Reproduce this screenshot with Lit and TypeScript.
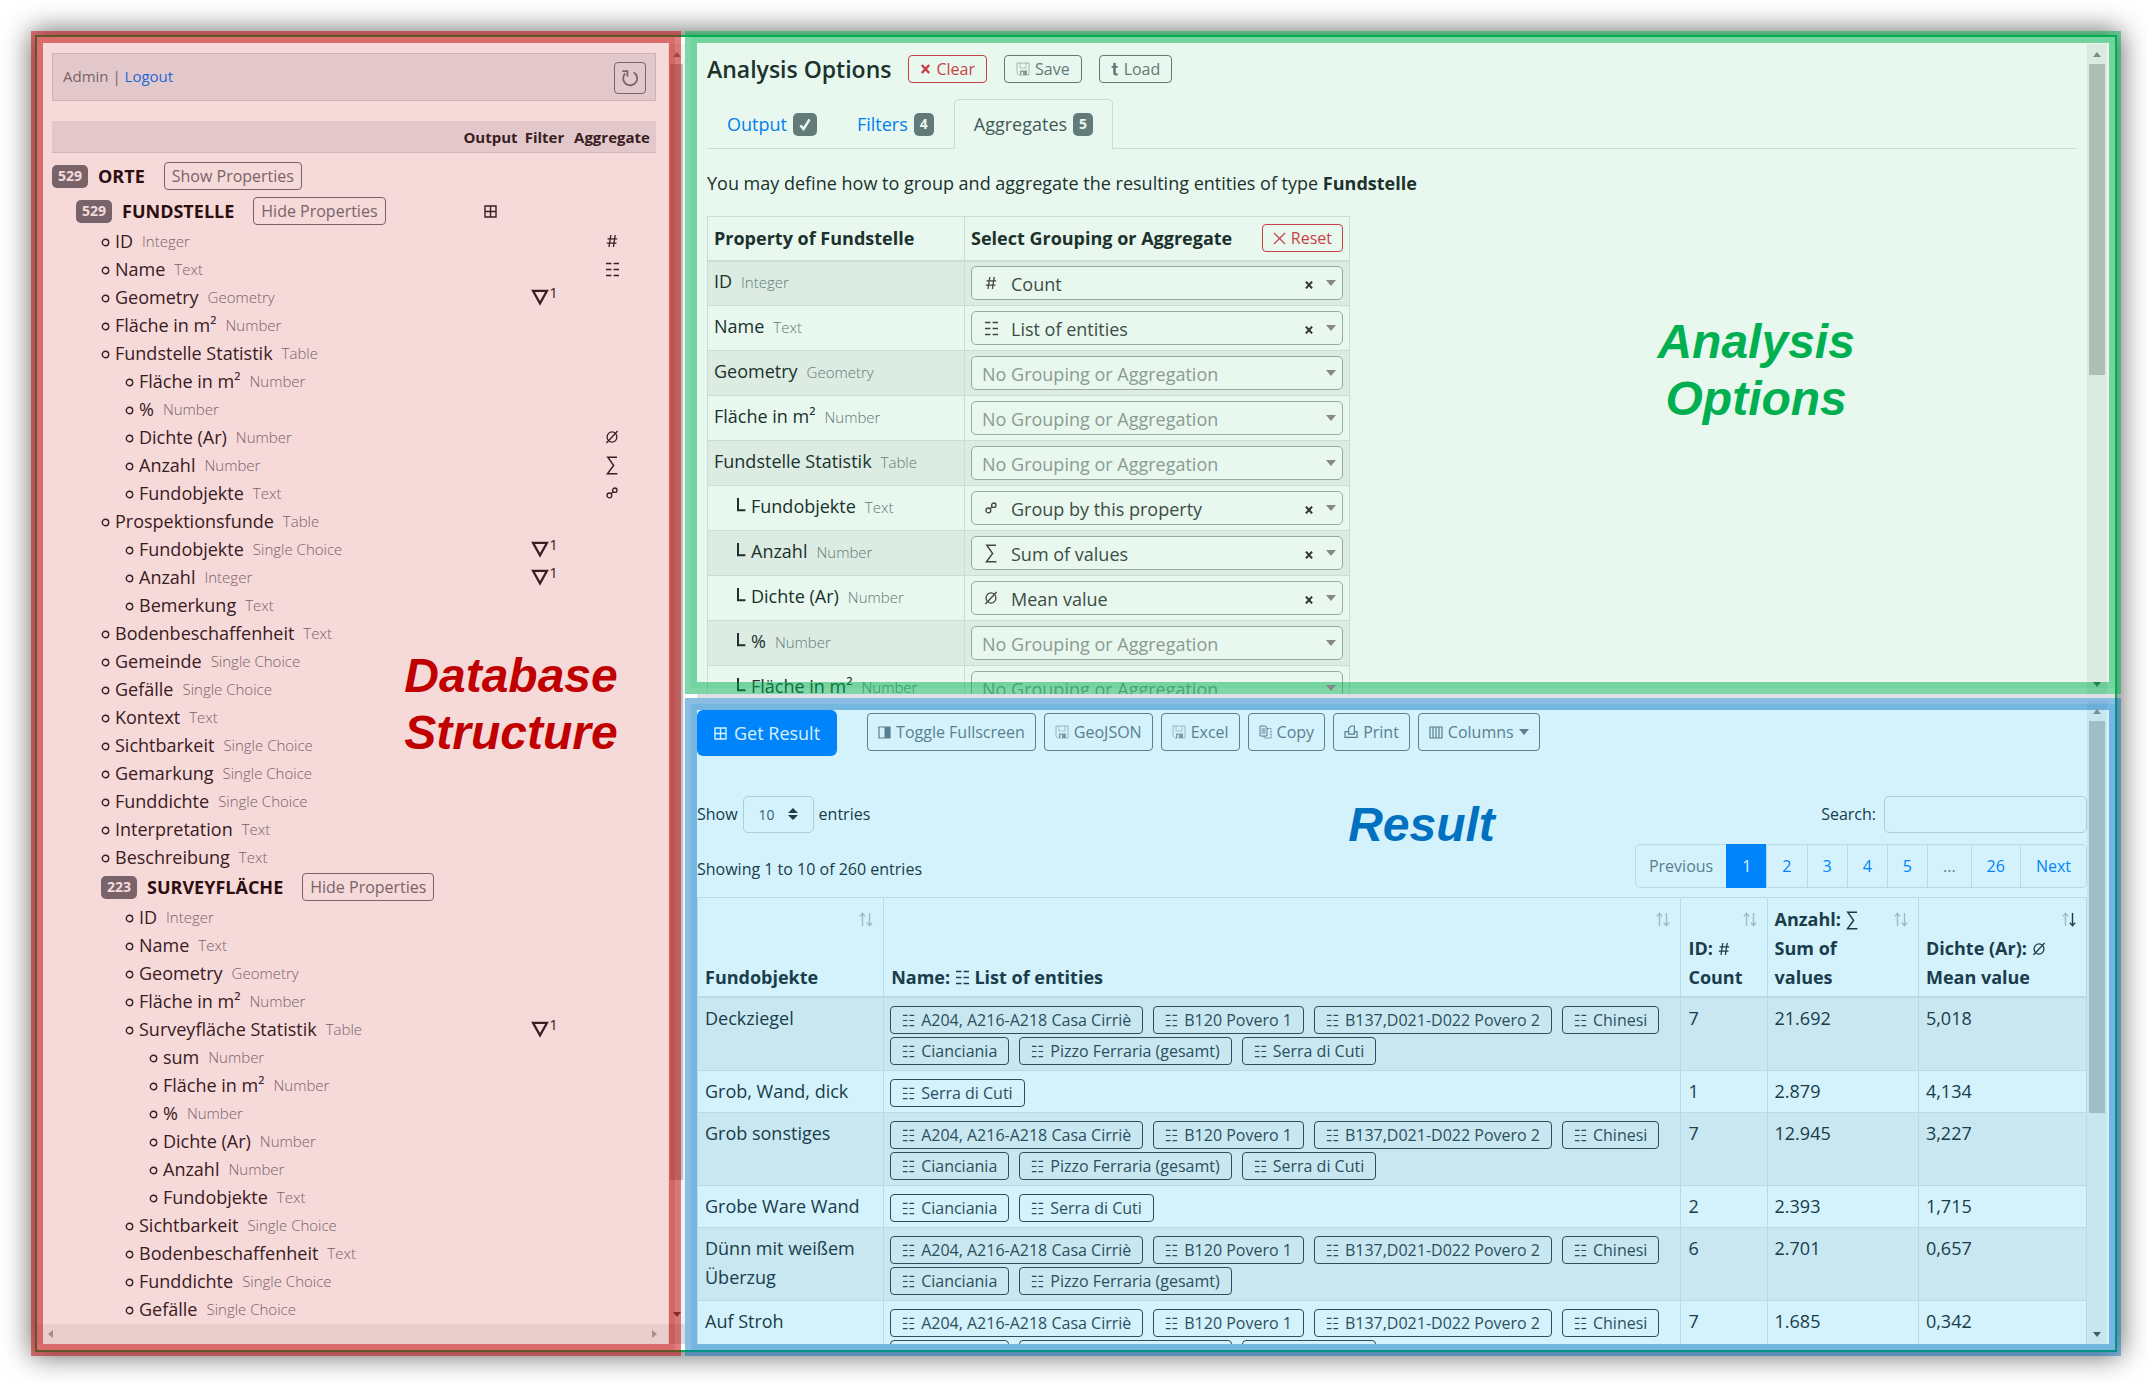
import { LitElement, html, css, svg, nothing, TemplateResult } from "lit";
import { customElement, property } from "lit/decorators.js";

type IconName =
  | "grid" | "hash" | "list" | "filter" | "mean" | "sum" | "group" | "reload"
  | "save" | "load" | "cross" | "thinCross" | "check" | "half" | "copy" | "print"
  | "columns" | "caret" | "sort" | "elbow" | "bullet" | "updown";

const GLYPHS: Record<IconName, { w: number; h: number; art: TemplateResult }> = {
  grid: { w: 13, h: 13, art: svg`<path d="M1 1h11v11H1zM6.5 1v11M1 6.5h11" fill="none" stroke="currentColor" stroke-width="1.4"/>` },
  hash: { w: 12, h: 14, art: svg`<path d="M4.8 1 3 13M9.2 1 7.4 13M1.6 4.8h9.6M.8 9.2h9.6" fill="none" stroke="currentColor" stroke-width="1.3"/>` },
  list: { w: 15, h: 15, art: svg`<path d="M1 1.5h5.4M8.6 1.5H14M1 7.5h5.4M8.6 7.5H14M1 13.5h5.4M8.6 13.5H14" fill="none" stroke="currentColor" stroke-width="1.4"/>` },
  filter: { w: 18, h: 17, art: svg`<path d="M2 1.8h14L9 14.4z" fill="none" stroke="currentColor" stroke-width="2.2"/>` },
  mean: { w: 14, h: 14, art: svg`<ellipse cx="7" cy="7" rx="4.9" ry="5.2" fill="none" stroke="currentColor" stroke-width="1.3"/><path d="M1.4 13 12.6 1" stroke="currentColor" stroke-width="1.3"/>` },
  sum: { w: 12, h: 19, art: svg`<path d="M11 1.2H1.8L7.6 9.4 1.4 17.8H11.4" fill="none" stroke="currentColor" stroke-width="1.5"/>` },
  group: { w: 12, h: 12, art: svg`<circle cx="3.4" cy="8.4" r="2.4" fill="none" stroke="currentColor" stroke-width="1.3"/><circle cx="8.8" cy="3.2" r="2.2" fill="none" stroke="currentColor" stroke-width="1.3"/><path d="M5 6.8 7.2 4.8" stroke="currentColor" stroke-width="1.3"/>` },
  reload: { w: 18, h: 18, art: svg`<path d="M12.6 3.2A7 7 0 1 1 4.2 4.4" fill="none" stroke="currentColor" stroke-width="1.8"/><path d="M1.4 2.2H6.4V7.4" fill="none" stroke="currentColor" stroke-width="1.8"/>` },
  save: { w: 14, h: 14, art: svg`<path d="M1 1h12v12H3L1 11z" fill="none" stroke="currentColor" stroke-width="1" stroke-opacity=".5"/><path d="M4 1v5h6V1" fill="none" stroke="currentColor" stroke-width="1" stroke-opacity=".4"/><path d="M4 8.5h7V13H4z" fill="currentColor" fill-opacity=".75"/><path d="M5.4 9.8h1.6V13H5.4z" fill="#fff"/>` },
  load: { w: 8, h: 14, art: svg`<path d="M2.2 1h2.6v3h2v1.8h-2v4.6q0 1 1 1h1v1.8q-4.6.9-4.6-2.4v-5H.6V4h1.6z" fill="currentColor"/>` },
  cross: { w: 11, h: 12, art: svg`<path d="M1.8 2 9.2 10M9.2 2 1.8 10" fill="none" stroke="currentColor" stroke-width="2.5"/>` },
  thinCross: { w: 13, h: 13, art: svg`<path d="M1 1 12 12M12 1 1 12" fill="none" stroke="currentColor" stroke-width="1.2"/>` },
  check: { w: 12, h: 13, art: svg`<path d="M1.4 7.4 4.6 11 10.6 1.4" fill="none" stroke="currentColor" stroke-width="2.5"/>` },
  half: { w: 13, h: 13, art: svg`<path d="M1 1h11v11H1z" fill="none" stroke="currentColor" stroke-width="1.2"/><path d="M6.5 1H12v11H6.5z" fill="currentColor"/>` },
  copy: { w: 13, h: 14, art: svg`<path d="M1 1h5.5l1.5 2v8H1z" fill="none" stroke="currentColor" stroke-width="1"/><path d="M2.5 4h4M2.5 6h4M2.5 8h4" stroke="currentColor" stroke-width="1"/><path d="M8 3.5h4v9.5H5v-2" fill="none" stroke="currentColor" stroke-width="1" stroke-dasharray="2 1"/>` },
  print: { w: 14, h: 14, art: svg`<path d="M4.6 6.6H1v5.8h12V6.6h-2.6M4.6 9.2V3.4L7 1h3.4v8.2z" fill="none" stroke="currentColor" stroke-width="1.2"/>` },
  columns: { w: 14, h: 13, art: svg`<path d="M1 1h12v11H1zM4 1v11M7 1v11M10 1v11" fill="none" stroke="currentColor" stroke-width="1.2"/>` },
  caret: { w: 10, h: 8, art: svg`<path d="M0 1h10L5 7z" fill="currentColor"/>` },
  sort: { w: 14, h: 15, art: svg`<path class="up" d="M3.5 14V1.6M.8 4.4 3.5 1.4 6.2 4.4" fill="none" stroke="currentColor" stroke-width="1.4"/><path class="down" d="M10.5 1v12.4M7.8 10.6l2.7 3 2.7-3" fill="none" stroke="currentColor" stroke-width="1.4"/>` },
  elbow: { w: 10, h: 16, art: svg`<path d="M2 0v12.2h7.4" fill="none" stroke="currentColor" stroke-width="2"/>` },
  bullet: { w: 9, h: 9, art: svg`<circle cx="4.5" cy="4.5" r="3.2" fill="none" stroke="currentColor" stroke-width="1.4"/>` },
  updown: { w: 10, h: 12, art: svg`<path d="M5 0l5 5H0zM5 12l5-5H0z" fill="currentColor"/>` },
};

const icon = (name: IconName) => {
  const g = GLYPHS[name];
  return html`<svg class="icon icon-${name}" width=${g.w} height=${g.h} viewBox="0 0 ${g.w} ${g.h}" aria-hidden="true">${g.art}</svg>`;
};

const shared = css`
  *, *::before, *::after { box-sizing: border-box; }
  :host {
    display: block;
    font-family: "Open Sans", "Noto Sans", sans-serif;
    font-size: 18px;
    line-height: 28px;
    color: #212529;
  }
  button, select, input { font-family: inherit; margin: 0; }
  svg { flex: none; }
  .kind { font-size: 15px; font-weight: 300; color: #6c757d; margin-left: 9px; }
  .btn {
    display: inline-flex; align-items: center; justify-content: center; gap: 5px;
    height: 28px; padding: 0 10px; background: none;
    border: 1px solid #6c757d; border-radius: 4px; color: #6c757d;
    font-size: 16px; line-height: 24px; white-space: nowrap;
  }
  .danger { color: #dc3545; border-color: #dc3545; }
  .badge {
    display: inline-flex; align-items: center; justify-content: center;
    height: 23px; padding: 0 6px; border-radius: 5px; background: #6c757d; color: #fff;
    font-size: 14px; font-weight: 700; line-height: 20px;
  }
`;

@customElement("scroll-track")
class ScrollTrack extends LitElement {
  @property({ type: Number }) size = 50;
  static styles = css`
    :host { display: flex; flex-direction: column; background: #f1f1f1; }
    .cap { height: 20px; flex: none; display: flex; align-items: center; justify-content: center; color: #505050; }
    .first { color: #8b8b8b; }
    .lane { flex: 1; min-height: 0; padding: 0 2px; }
    .thumb { background: #c1c1c1; }
  `;
  render() {
    return html`
      <div class="cap first"><svg width="8" height="5"><path d="M0 5 4 0l4 5z" fill="currentColor"/></svg></div>
      <div class="lane"><div class="thumb" style="height:${this.size}%"></div></div>
      <div class="cap"><svg width="8" height="5"><path d="M0 0h8L4 5z" fill="currentColor"/></svg></div>`;
  }
}

interface Prop { level: number; name: string; kind: string; filter?: number; agg?: IconName; }
interface Entity { level: number; name: string; count: number; open: boolean; output?: boolean; props: Prop[]; }

const p = (level: number, name: string, kind: string, agg?: IconName, filter?: number): Prop => ({ level, name, kind, agg, filter });

const ENTITIES: Entity[] = [
  { level: 0, name: "ORTE", count: 529, open: false, props: [] },
  {
    level: 1, name: "FUNDSTELLE", count: 529, open: true, output: true, props: [
      p(2, "ID", "Integer", "hash"),
      p(2, "Name", "Text", "list"),
      p(2, "Geometry", "Geometry", undefined, 1),
      p(2, "Fläche in m²", "Number"),
      p(2, "Fundstelle Statistik", "Table"),
      p(3, "Fläche in m²", "Number"),
      p(3, "%", "Number"),
      p(3, "Dichte (Ar)", "Number", "mean"),
      p(3, "Anzahl", "Number", "sum"),
      p(3, "Fundobjekte", "Text", "group"),
      p(2, "Prospektionsfunde", "Table"),
      p(3, "Fundobjekte", "Single Choice", undefined, 1),
      p(3, "Anzahl", "Integer", undefined, 1),
      p(3, "Bemerkung", "Text"),
      p(2, "Bodenbeschaffenheit", "Text"),
      p(2, "Gemeinde", "Single Choice"),
      p(2, "Gefälle", "Single Choice"),
      p(2, "Kontext", "Text"),
      p(2, "Sichtbarkeit", "Single Choice"),
      p(2, "Gemarkung", "Single Choice"),
      p(2, "Funddichte", "Single Choice"),
      p(2, "Interpretation", "Text"),
      p(2, "Beschreibung", "Text"),
    ],
  },
  {
    level: 2, name: "SURVEYFLÄCHE", count: 223, open: true, props: [
      p(3, "ID", "Integer"),
      p(3, "Name", "Text"),
      p(3, "Geometry", "Geometry"),
      p(3, "Fläche in m²", "Number"),
      p(3, "Surveyfläche Statistik", "Table", undefined, 1),
      p(4, "sum", "Number"),
      p(4, "Fläche in m²", "Number"),
      p(4, "%", "Number"),
      p(4, "Dichte (Ar)", "Number"),
      p(4, "Anzahl", "Number"),
      p(4, "Fundobjekte", "Text"),
      p(3, "Sichtbarkeit", "Single Choice"),
      p(3, "Bodenbeschaffenheit", "Text"),
      p(3, "Funddichte", "Single Choice"),
      p(3, "Gefälle", "Single Choice"),
    ],
  },
];

@customElement("database-structure")
class DatabaseStructure extends LitElement {
  static styles = [shared, css`
    :host { display: grid; grid-template-columns: minmax(0, 1fr) 17px; grid-template-rows: minmax(0, 1fr) 20px; background: #fff; padding: 7px 0 6px; min-height: 0; }
    .body { overflow: hidden; padding: 9px 12px 0 15px; }
    .user { display: flex; align-items: flex-start; justify-content: space-between; height: 48px; padding: 8px 9px 8px 10px; background: #e9ecef; border: 1px solid #ced4da; color: #6c757d; font-size: 15px; }
    .user a { color: #007bff; text-decoration: none; }
    .reload { width: 32px; height: 32px; padding: 0; }
    .row { display: flex; align-items: center; height: 28px; white-space: nowrap; }
    .head { height: 32px; margin: 20px 0 7px; background: #e9ecef; border-bottom: 1px solid #ced4da; font-size: 15px; font-weight: 700; }
    .entity { height: 32px; }
    .entity.root { margin-bottom: 3px; }
    .what { flex: 1; display: flex; align-items: center; min-width: 0; }
    .l1 { padding-left: 24px; }
    .l2 { padding-left: 49px; }
    .l3 { padding-left: 73px; }
    .l4 { padding-left: 97px; }
    .title { margin: 0 19px 0 10px; font-size: 18px; font-weight: 700; color: #111; }
    .entity .btn { padding: 0 7px; }
    .name { margin-left: 5px; }
    .icon-bullet { margin-top: 2px; }
    .out { width: 61px; } .fil { width: 47px; } .agg { width: 88px; }
    .out, .fil, .agg { flex: none; display: flex; align-items: center; justify-content: center; }
    sup { font-size: 15px; line-height: 15px; margin-bottom: 10px; }
    .hbar { display: flex; align-items: center; justify-content: space-between; padding: 0 11px; background: #f1f1f1; color: #a3a3a3; }
    .corner { background: #dcdcdc; }
  `];
  private entity(e: Entity) {
    return html`
      <div class="row entity ${e.level ? "" : "root"}">
        <div class="what l${e.level}">
          <span class="badge">${e.count}</span><span class="title">${e.name}</span>
          <button class="btn" type="button">${e.open ? "Hide Properties" : "Show Properties"}</button>
        </div>
        <div class="out">${e.output ? icon("grid") : nothing}</div><div class="fil"></div><div class="agg"></div>
      </div>
      ${e.props.map((q) => html`
        <div class="row">
          <div class="what l${q.level}">${icon("bullet")}<span class="name">${q.name}</span><span class="kind">${q.kind}</span></div>
          <div class="out"></div>
          <div class="fil">${q.filter ? html`${icon("filter")}<sup>${q.filter}</sup>` : nothing}</div>
          <div class="agg">${q.agg ? icon(q.agg) : nothing}</div>
        </div>`)}`;
  }
  render() {
    return html`
      <div class="body">
        <div class="user">
          <span>Admin | <a href="#logout">Logout</a></span>
          <button class="btn reload" type="button" aria-label="Reload">${icon("reload")}</button>
        </div>
        <div class="row head"><div class="what"></div><div class="out">Output</div><div class="fil">Filter</div><div class="agg">Aggregate</div></div>
        ${ENTITIES.map((e) => this.entity(e))}
      </div>
      <scroll-track .size=${90}></scroll-track>
      <div class="hbar">
        <svg width="5" height="8"><path d="M5 0v8L0 4z" fill="currentColor"/></svg>
        <svg width="5" height="8"><path d="M0 0v8l5-4z" fill="currentColor"/></svg>
      </div>
      <div class="corner"></div>`;
  }
}

const AGG_ICON: Record<string, IconName> = {
  "Count": "hash",
  "List of entities": "list",
  "Group by this property": "group",
  "Sum of values": "sum",
  "Mean value": "mean",
};
const NONE = "No Grouping or Aggregation";

const AGGREGATES: { name: string; kind: string; child?: boolean; value?: string }[] = [
  { name: "ID", kind: "Integer", value: "Count" },
  { name: "Name", kind: "Text", value: "List of entities" },
  { name: "Geometry", kind: "Geometry" },
  { name: "Fläche in m²", kind: "Number" },
  { name: "Fundstelle Statistik", kind: "Table" },
  { name: "Fundobjekte", kind: "Text", child: true, value: "Group by this property" },
  { name: "Anzahl", kind: "Number", child: true, value: "Sum of values" },
  { name: "Dichte (Ar)", kind: "Number", child: true, value: "Mean value" },
  { name: "%", kind: "Number", child: true },
  { name: "Fläche in m²", kind: "Number", child: true },
];

@customElement("analysis-options")
class AnalysisOptions extends LitElement {
  static styles = [shared, css`
    :host { display: grid; grid-template-columns: minmax(0, 1fr) 20px; padding: 7px 8px 0 12px; min-height: 0; }
    .body { overflow: hidden; padding: 9px 10px 0; }
    header { display: flex; align-items: center; gap: 17px; height: 32px; }
    h1 { margin: 0; font-size: 23px; font-weight: 600; line-height: 32px; }
    header .btn { padding: 0 11px; }
    nav { display: flex; margin: 14px 0 0; border-bottom: 1px solid #dee2e6; }
    nav a { display: flex; align-items: center; gap: 6px; height: 50px; margin-bottom: -1px; padding: 0 19px; border: 1px solid transparent; border-radius: 5px 5px 0 0; color: #007bff; text-decoration: none; }
    nav a.active { color: #495057; background: #fff; border-color: #dee2e6 #dee2e6 #fff; font-weight: 500; }
    p { margin: 20px 0 19px; }
    p b { font-weight: 700; }
    table { border-collapse: collapse; width: 643px; }
    th, td { border: 1px solid #dee2e6; padding: 0 6px; vertical-align: middle; text-align: left; }
    th { height: 44px; border-bottom-width: 2px; font-weight: 700; font-size: 18px; white-space: nowrap; }
    th:first-child { width: 257px; }
    .pick { display: flex; align-items: center; justify-content: space-between; }
    td { height: 45px; padding-bottom: 2px; }
    td:last-child { padding-bottom: 0; }
    tbody tr:nth-child(odd) td { background: #f2f2f2; }
    .prop { display: flex; align-items: center; white-space: nowrap; padding-bottom: 2px; }
    .prop.child { padding-left: 22px; gap: 5px; }
    .choice { display: grid; grid-template-columns: 40px 1fr 20px 24px; align-items: center; }
    .choice select { grid-row: 1; grid-column: 1 / -1; width: 100%; height: 34px; padding: 2px 10px 0; appearance: none; background: #fff; border: 1px solid #aaa; border-radius: 5px; font-size: 18px; line-height: 28px; color: #444; }
    .choice select.empty { color: #999; }
    .choice select.set { padding-left: 39px; }
    .mark, .clear, .arrow { grid-row: 1; z-index: 1; display: flex; align-items: center; justify-content: center; color: #444; }
    .mark { grid-column: 1; pointer-events: none; }
    .clear { grid-column: 3; border: 0; background: none; padding: 3px 0 0; color: #333; }
    .clear svg { width: 10px; height: 10px; }
    .arrow { grid-column: 4; color: #888; pointer-events: none; }
  `];
  render() {
    return html`
      <div class="body">
        <header>
          <h1>Analysis Options</h1>
          <button class="btn danger" type="button">${icon("cross")}Clear</button>
          <button class="btn" type="button">${icon("save")}Save</button>
          <button class="btn" type="button">${icon("load")}Load</button>
        </header>
        <nav>
          <a href="#output">Output <span class="badge">${icon("check")}</span></a>
          <a href="#filters">Filters <span class="badge">4</span></a>
          <a href="#aggregates" class="active">Aggregates <span class="badge">5</span></a>
        </nav>
        <p>You may define how to group and aggregate the resulting entities of type <b>Fundstelle</b></p>
        <table>
          <thead><tr>
            <th>Property of Fundstelle</th>
            <th><div class="pick">Select Grouping or Aggregate<button class="btn danger" type="button">${icon("thinCross")}Reset</button></div></th>
          </tr></thead>
          <tbody>
            ${AGGREGATES.map((a) => html`<tr>
              <td><div class="prop ${a.child ? "child" : ""}">${a.child ? icon("elbow") : nothing}<span>${a.name}<span class="kind">${a.kind}</span></span></div></td>
              <td><div class="choice">
                <select class=${a.value ? "set" : "empty"} aria-label="Aggregate for ${a.name}">
                  ${[NONE, ...Object.keys(AGG_ICON)].map((o) => html`<option ?selected=${o === (a.value ?? NONE)}>${o}</option>`)}
                </select>
                ${a.value ? html`<span class="mark">${icon(AGG_ICON[a.value])}</span>
                  <button class="clear" type="button" aria-label="Remove">${icon("cross")}</button>` : nothing}
                <span class="arrow">${icon("caret")}</span>
              </div></td>
            </tr>`)}
          </tbody>
        </table>
      </div>
      <scroll-track .size=${51}></scroll-track>`;
  }
}

const A204 = "A204, A216-A218 Casa Cirriè";
const B120 = "B120 Povero 1";
const B137 = "B137,D021-D022 Povero 2";
const CHIN = "Chinesi";
const CIAN = "Cianciania";
const PIZZO = "Pizzo Ferraria (gesamt)";
const SERRA = "Serra di Cuti";

const RESULTS: [string, string[], string, string, string][] = [
  ["Deckziegel", [A204, B120, B137, CHIN, CIAN, PIZZO, SERRA], "7", "21.692", "5,018"],
  ["Grob, Wand, dick", [SERRA], "1", "2.879", "4,134"],
  ["Grob sonstiges", [A204, B120, B137, CHIN, CIAN, PIZZO, SERRA], "7", "12.945", "3,227"],
  ["Grobe Ware Wand", [CIAN, SERRA], "2", "2.393", "1,715"],
  ["Dünn mit weißem Überzug", [A204, B120, B137, CHIN, CIAN, PIZZO], "6", "2.701", "0,657"],
  ["Auf Stroh", [A204, B120, B137, CHIN, CIAN, PIZZO, SERRA], "7", "1.685", "0,342"],
];

@customElement("query-result")
class QueryResult extends LitElement {
  static styles = [shared, css`
    :host { display: grid; grid-template-columns: minmax(0, 1fr) 20px; padding: 3px 8px 6px 12px; min-height: 0; }
    .body { overflow: hidden; padding-top: 9px; font-size: 16px; }
    .bar { display: flex; align-items: flex-start; }
    .go { display: flex; align-items: center; gap: 7px; height: 46px; margin-right: 30px; padding: 0 17px; border: 0; border-radius: 6px; background: #007bff; color: #fff; font-size: 18px; }
    .tools { display: flex; gap: 8px; padding-top: 3px; }
    .tools .btn { height: 38px; }
    .line { display: flex; justify-content: space-between; align-items: center; height: 38px; margin-top: 39px; }
    label { display: flex; align-items: center; gap: 5px; }
    .count { display: grid; align-items: center; }
    .count select { grid-area: 1 / 1; width: 71px; height: 37px; padding: 0 15px; appearance: none; background: none; border: 1px solid #ced4da; border-radius: 5px; font-size: 14px; color: #495057; }
    .count svg { grid-area: 1 / 1; justify-self: end; margin-right: 16px; pointer-events: none; }
    .find { gap: 8px; }
    .find input { width: 203px; height: 37px; padding: 0 10px; background: none; border: 1px solid #ced4da; border-radius: 5px; font-size: 16px; }
    .second { margin-top: 11px; height: 44px; }
    .info { padding-top: 5px; }
    .pages { display: flex; margin: 0; padding: 0; list-style: none; }
    .pages a { display: block; height: 44px; margin-left: -1px; padding: 7px 15px; border: 1px solid #dee2e6; color: #007bff; text-decoration: none; }
    .pages li:first-child a { border-radius: 5px 0 0 5px; padding: 7px 13px; }
    .pages li:last-child a { border-radius: 0 5px 5px 0; }
    .pages .muted { color: #6c757d; }
    .pages .on { background: #007bff; border-color: #007bff; color: #fff; }
    table { width: 100%; margin-top: 9px; border-collapse: collapse; table-layout: fixed; font-size: 18px; line-height: 29px; }
    th, td { border: 1px solid #dee2e6; text-align: left; vertical-align: top; padding: 6px 7px 0; }
    th { font-weight: 700; padding: 7px 10px 4px 7px; border-bottom-width: 2px; white-space: nowrap; }
    .c1 { width: 13.4%; } .c2 { width: 57.4%; } .c3 { width: 6.2%; } .c4 { width: 10.9%; } .c5 { width: 12.1%; }
    .th { display: flex; justify-content: space-between; align-items: flex-end; min-height: 87px; }
    .th .icon-sort { align-self: flex-start; margin: 7px 0 0 -14px; color: #212529; }
    .icon-sort path { opacity: .3; }
    .sorted .icon-sort .down { opacity: 1; }
    .th .icon-list, .th .icon-hash, .th .icon-mean { vertical-align: -1px; }
    .th .icon-sum { vertical-align: -4px; }
    tbody tr:nth-child(odd) td { background: #f2f2f2; }
    td.chips { padding: 8px 6px 5px; }
    .wrap { display: flex; flex-wrap: wrap; gap: 3px 10px; }
    .chip { gap: 6px; padding: 0 11px; border-color: #343a40; color: #343a40; }
    .chip .icon { width: 13px; height: 13px; }
  `];
  private head(label: TemplateResult, sorted = false) {
    return html`<th scope="col"><div class="th ${sorted ? "sorted" : ""}"><span>${label}</span>${icon("sort")}</div></th>`;
  }
  render() {
    const pages = ["Previous", "1", "2", "3", "4", "5", "...", "26", "Next"];
    return html`
      <div class="body">
        <div class="bar">
          <button class="go" type="button">${icon("grid")}Get Result</button>
          <div class="tools">
            <button class="btn" type="button">${icon("half")}Toggle Fullscreen</button>
            <button class="btn" type="button">${icon("save")}GeoJSON</button>
            <button class="btn" type="button">${icon("save")}Excel</button>
            <button class="btn" type="button">${icon("copy")}Copy</button>
            <button class="btn" type="button">${icon("print")}Print</button>
            <button class="btn" type="button">${icon("columns")}Columns${icon("caret")}</button>
          </div>
        </div>
        <div class="line">
          <label>Show <span class="count"><select><option>10</option><option>25</option><option>50</option></select>${icon("updown")}</span> entries</label>
          <label class="find">Search: <input type="search"></label>
        </div>
        <div class="line second">
          <span class="info">Showing 1 to 10 of 260 entries</span>
          <ul class="pages">
            ${pages.map((t) => html`<li><a href="#page" class=${t === "1" ? "on" : t === "Previous" || t === "..." ? "muted" : ""}>${t}</a></li>`)}
          </ul>
        </div>
        <table>
          <colgroup><col class="c1"><col class="c2"><col class="c3"><col class="c4"><col class="c5"></colgroup>
          <thead><tr>
            ${this.head(html`Fundobjekte`)}
            ${this.head(html`Name: ${icon("list")} List of entities`)}
            ${this.head(html`ID: ${icon("hash")}<br>Count`)}
            ${this.head(html`Anzahl: ${icon("sum")}<br>Sum of<br>values`)}
            ${this.head(html`Dichte (Ar): ${icon("mean")}<br>Mean value`, true)}
          </tr></thead>
          <tbody>
            ${RESULTS.map(([name, chips, n, sum, mean]) => html`<tr>
              <td>${name}</td>
              <td class="chips"><div class="wrap">${chips.map((c) => html`<button class="btn chip" type="button">${icon("list")}${c}</button>`)}</div></td>
              <td>${n}</td><td>${sum}</td><td>${mean}</td>
            </tr>`)}
          </tbody>
        </table>
      </div>
      <scroll-track .size=${65}></scroll-track>`;
  }
}

@customElement("app-root")
class AppRoot extends LitElement {
  static styles = css`
    *, *::before { box-sizing: border-box; }
    :host { display: block; background: #fff; }
    .stage { display: flex; height: 100vh; padding: 35px 30px 31px 35px; overflow: hidden; }
    .frame { flex: 1; min-width: 0; display: grid; grid-template-columns: minmax(0, 324fr) minmax(0, 715fr); border: 2px solid #00b050; background: #fff; box-shadow: 0 0 26px 4px rgba(0, 0, 0, .6); }
    .main { display: grid; grid-template-rows: minmax(0, 657fr) 4px minmax(0, 652fr); min-height: 0; }
    .gutter { margin-left: 12px; background: #dee2e6; }
    .region { position: relative; display: grid; grid-template: minmax(0, 1fr) / minmax(0, 1fr); min-height: 0; }
    .tint { position: absolute; pointer-events: none; display: flex; outline-style: solid; outline-width: 12px; outline-offset: -6px; }
    .red { inset: 0 10px 0 0; background: rgba(192, 0, 0, .15); outline-color: rgba(192, 0, 0, .5); color: #c00000; }
    .green { inset: 0 0 6px 6px; background: rgba(0, 176, 80, .09); outline-color: rgba(0, 176, 80, .5); color: #00b050; }
    .blue { inset: 6px 0 0 6px; background: rgba(0, 176, 240, .17); outline-color: rgba(0, 112, 192, .46); color: #0070c0; }
    .caption { position: absolute; transform: translate(-50%, -50%); font: italic 700 48px/57px "Liberation Sans", Arial, sans-serif; text-align: center; }
    .red .caption { left: 74.3%; top: 50.8%; }
    .green .caption { left: 74.8%; top: 51.2%; }
    .blue .caption { left: 51.3%; top: 18.5%; }
  `;
  render() {
    return html`
      <div class="stage"><div class="frame">
        <section class="region">
          <database-structure></database-structure>
          <div class="tint red"><div class="caption">Database<br>Structure</div></div>
        </section>
        <div class="main">
          <section class="region">
            <analysis-options></analysis-options>
            <div class="tint green"><div class="caption">Analysis<br>Options</div></div>
          </section>
          <div class="gutter"></div>
          <section class="region">
            <query-result></query-result>
            <div class="tint blue"><div class="caption">Result</div></div>
          </section>
        </div>
      </div></div>`;
  }
}
